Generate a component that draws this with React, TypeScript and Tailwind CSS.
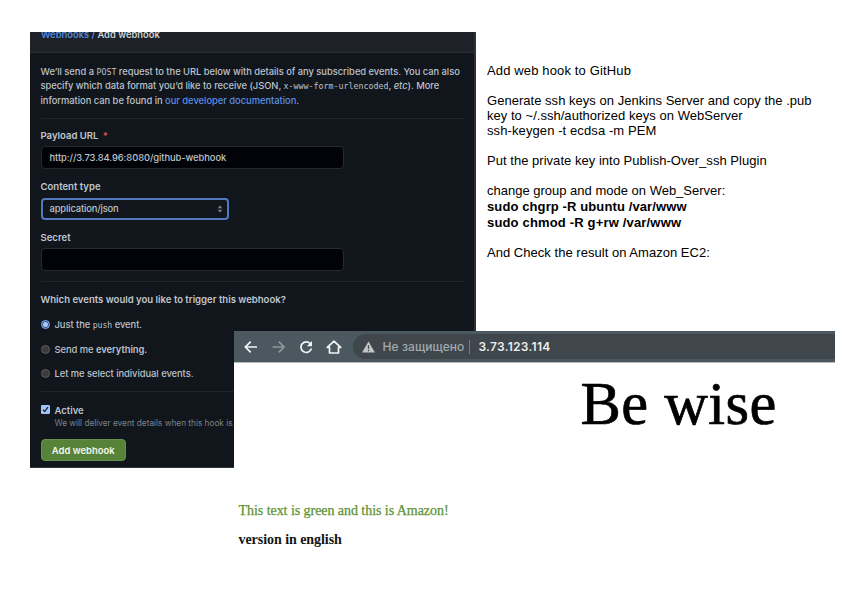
import type { ReactNode } from "react";

function Divider({ className = "" }: { className?: string }) {
  return <div className={`h-px w-[423px] bg-[#20252c] ${className}`} />;
}

function Label({ children, className = "" }: { children: ReactNode; className?: string }) {
  return (
    <div className={`h-3.5 whitespace-nowrap text-[9.55px] font-semibold leading-[14px] text-[#c0c7cf] ${className}`}>{children}</div>
  );
}

function Radio({ checked = false, className = "", children }: { checked?: boolean; className?: string; children: ReactNode }) {
  return (
    <div className={`flex h-3.5 items-center gap-[5px] whitespace-nowrap ${className}`}>
      {checked ? (
        <span className="-mt-px flex size-[9px] items-center justify-center rounded-full border border-[#8ab0ee] bg-[#33527f]">
          <span className="size-[5px] rounded-full bg-[#a9c8ff]" />
        </span>
      ) : (
        <span className="-mt-px size-[9px] rounded-full border border-[#5c5d5f] bg-[#3b3b3b]" />
      )}
      <span className="pt-px tracking-[-0.05px]">{children}</span>
    </div>
  );
}

function WebhookForm() {
  return (
    <section className="h-[436px] w-[446px] shrink-0 overflow-hidden border-b border-r-2 border-b-[#30343a] border-r-[#2c313c] bg-[#11151c] font-['Inter','Liberation_Sans',sans-serif] text-[9.4px] font-medium text-[#bcc3cb]">
      <header className="flex h-[21px] items-start border-b border-[#292e35] bg-[#1e2127] pl-[11px]">
        <div className="-mt-[4px] whitespace-nowrap text-[9.4px] font-semibold leading-[14px]">
          <span className="text-[#5587d8]">Webhooks /</span> <span className="text-[#c9d1d9]">Add webhook</span>
        </div>
      </header>
      <div className="pl-[10.5px] pt-[11.5px]">
        <div className="whitespace-nowrap leading-[14.5px] tracking-[-0.035px]">
          <p>
            We’ll send a <code className="font-['DejaVu_Sans_Mono',monospace] text-[8.3px] font-normal tracking-normal">POST</code> request to the URL below with details of any subscribed events. You can also
          </p>
          <p>
            specify which data format you’d like to receive (JSON,{" "}
            <code className="font-['DejaVu_Sans_Mono',monospace] text-[8.3px] font-normal tracking-normal">x-www-form-urlencoded</code>, <em>etc</em>). More
          </p>
          <p>
            information can be found in <span className="text-[#5c90e4]">our developer documentation</span>.
          </p>
        </div>
        <Divider className="mt-[9.5px]" />
        <Label className="mt-[10px]">
          Payload URL <span className="ml-0.5 text-[#e5534b]">*</span>
        </Label>
        <div className="mt-[3px] flex h-[23px] w-[303px] items-center rounded-[4px] border border-[#252a31] bg-[#010309] pl-2 pt-[2px] tracking-[-0.08px]">
          http://3.73.84.96:8080/github-webhook
        </div>
        <Label className="mt-[11px]">Content type</Label>
        <div className="mt-[4px] flex h-[22px] w-[188px] items-center justify-between rounded-[4px] border-2 border-[#5079bf] pl-[7px] pr-[4px] tracking-[-0.15px]">
          <span className="pt-px">application/json</span>
          <svg className="h-2 w-[6px]" viewBox="0 0 6 8" fill="#7b8087">
            <path d="M3 0.6 5.3 3.3H0.7zM3 7.4 5.3 4.7H0.7z" />
          </svg>
        </div>
        <Label className="mt-[11px]">Secret</Label>
        <div className="mt-[3px] h-[23px] w-[303px] rounded-[4px] border border-[#252a31] bg-[#010309]" />
        <Divider className="mt-[10px]" />
        <Label className="mt-[11px]">Which events would you like to trigger this webhook?</Label>
        <Radio checked className="mt-[11px]">
          Just the <code className="font-['DejaVu_Sans_Mono',monospace] text-[8.2px] font-normal">push</code> event.
        </Radio>
        <Radio className="mt-[11px]">
          Send me <strong className="font-semibold">everything.</strong>
        </Radio>
        <Radio className="mt-[10.5px]">Let me select individual events.</Radio>
        <Divider className="mt-[10px]" />
        <div className="mt-[11px] flex h-3.5 items-center gap-[5px]">
          <svg className="-mt-px size-[9px]" viewBox="0 0 9 9">
            <rect width="9" height="9" rx="1.3" fill="#a3c3fb" />
            <path d="M2 4.8 3.7 6.5 7 2.2" fill="none" stroke="#20242b" strokeWidth="1.3" />
          </svg>
          <span className="pt-[2px] text-[9.5px] font-semibold">Active</span>
        </div>
        <p className="ml-[14px] whitespace-nowrap text-[8.25px] font-normal leading-[12px] text-[#7c838b]">
          We will deliver event details when this hook is triggered.
        </p>
        <button className="mt-[10px] flex h-[22px] w-[85.5px] items-center justify-center rounded-[4px] border border-[#67914c] bg-[#578339] pt-[2px] text-[9.45px] font-semibold text-[#f2f6ef]">
          Add webhook
        </button>
      </div>
    </section>
  );
}

function Notes() {
  return (
    <section className="whitespace-nowrap pl-[11px] pt-[31px] font-['Liberation_Sans',Arial,sans-serif] text-[13px] leading-[15px] tracking-[0.03px] text-black">
      <p className="tracking-[0.14px]">Add web hook to GitHub</p>
      <p className="mt-[15px]">Generate ssh keys on Jenkins Server and copy the .pub</p>
      <p>key to ~/.ssh/authorized keys on WebServer</p>
      <p className="tracking-[0.1px]">ssh-keygen -t ecdsa -m PEM</p>
      <p className="mt-[15px]">Put the private key into Publish-Over_ssh Plugin</p>
      <p className="mt-[15px] tracking-normal">change group and mode on Web_Server:</p>
      <p className="pt-px font-bold leading-4 tracking-[0.11px]">sudo chgrp -R ubuntu /var/www</p>
      <p className="font-bold leading-4 tracking-[0.17px]">sudo chmod -R g+rw /var/www</p>
      <p className="mt-[14px]">And Check the result on Amazon EC2:</p>
    </section>
  );
}

function BrowserWindow() {
  return (
    <section className="absolute left-[234px] top-[331px] h-[264px] w-[601px] bg-white">
      <div className="flex h-8 items-center border-b border-[#b4babd] bg-[#4b585f] pl-[10px] font-['Inter','Liberation_Sans',sans-serif]">
        <svg className="h-[14px] w-[100px] shrink-0" viewBox="0 0 100 14" fill="none" strokeWidth="1.7">
          <path d="M13 7H1.5M6.7 1.7 1.4 7l5.3 5.3" stroke="#f2f4f5" />
          <path d="M28.5 7H40M34.8 1.7 40.1 7l-5.3 5.3" stroke="#8c969b" />
          <path d="M66.6 4.1A5.3 5.3 0 1 0 67.4 8.6" stroke="#f2f4f5" />
          <path d="M68 1V6.2H62.8z" fill="#f2f4f5" />
          <path d="M83.3 7.4 90 1.2 96.7 7.4H94.5V13H85.5V7.4z" stroke="#f2f4f5" strokeLinejoin="round" />
        </svg>
        <div className="ml-[9px] flex h-[25px] flex-1 items-center rounded-l-full bg-[#3f474c] pl-[9px] text-[12px]">
          <svg className="h-3 w-[13px]" viewBox="0 0 13 12">
            <path d="M6.5 0.4 12.9 11.6H0.1z" fill="#c3c7c9" />
            <path d="M6.5 4.2V7.7M6.5 8.8V10.2" stroke="#3f474c" strokeWidth="1.3" />
          </svg>
          <span className="ml-[7.5px] whitespace-nowrap font-medium tracking-[0.07px] text-[#a3a9ac]">Не защищено</span>
          <span className="ml-[5px] h-[14px] w-px bg-[#757e83]" />
          <span className="ml-[8px] font-semibold tracking-[0.3px] text-[#eceeef]">3.73.123.114</span>
        </div>
      </div>
      <div className="pl-[4.5px] font-['Liberation_Serif','Times_New_Roman',serif]">
        <h1 className="mt-[9px] pl-[342px] text-[60.5px] leading-[64px] tracking-[0.45px] text-black [-webkit-text-stroke:0.7px_black]">Be wise</h1>
        <p className="mt-[67px] text-[14px] leading-4 tracking-[-0.05px] text-[#5c9335] [-webkit-text-stroke:0.25px_#5c9335]">
          This text is green and this is Amazon!
        </p>
        <p className="mt-[13px] text-[14px] font-bold leading-4 tracking-[-0.05px] text-[#151515]">version in english</p>
      </div>
    </section>
  );
}

export default function App() {
  return (
    <main className="relative h-[595px] w-[842px] overflow-hidden bg-white">
      <div className="flex items-start pl-[30px] pt-8">
        <WebhookForm />
        <Notes />
      </div>
      <BrowserWindow />
    </main>
  );
}
